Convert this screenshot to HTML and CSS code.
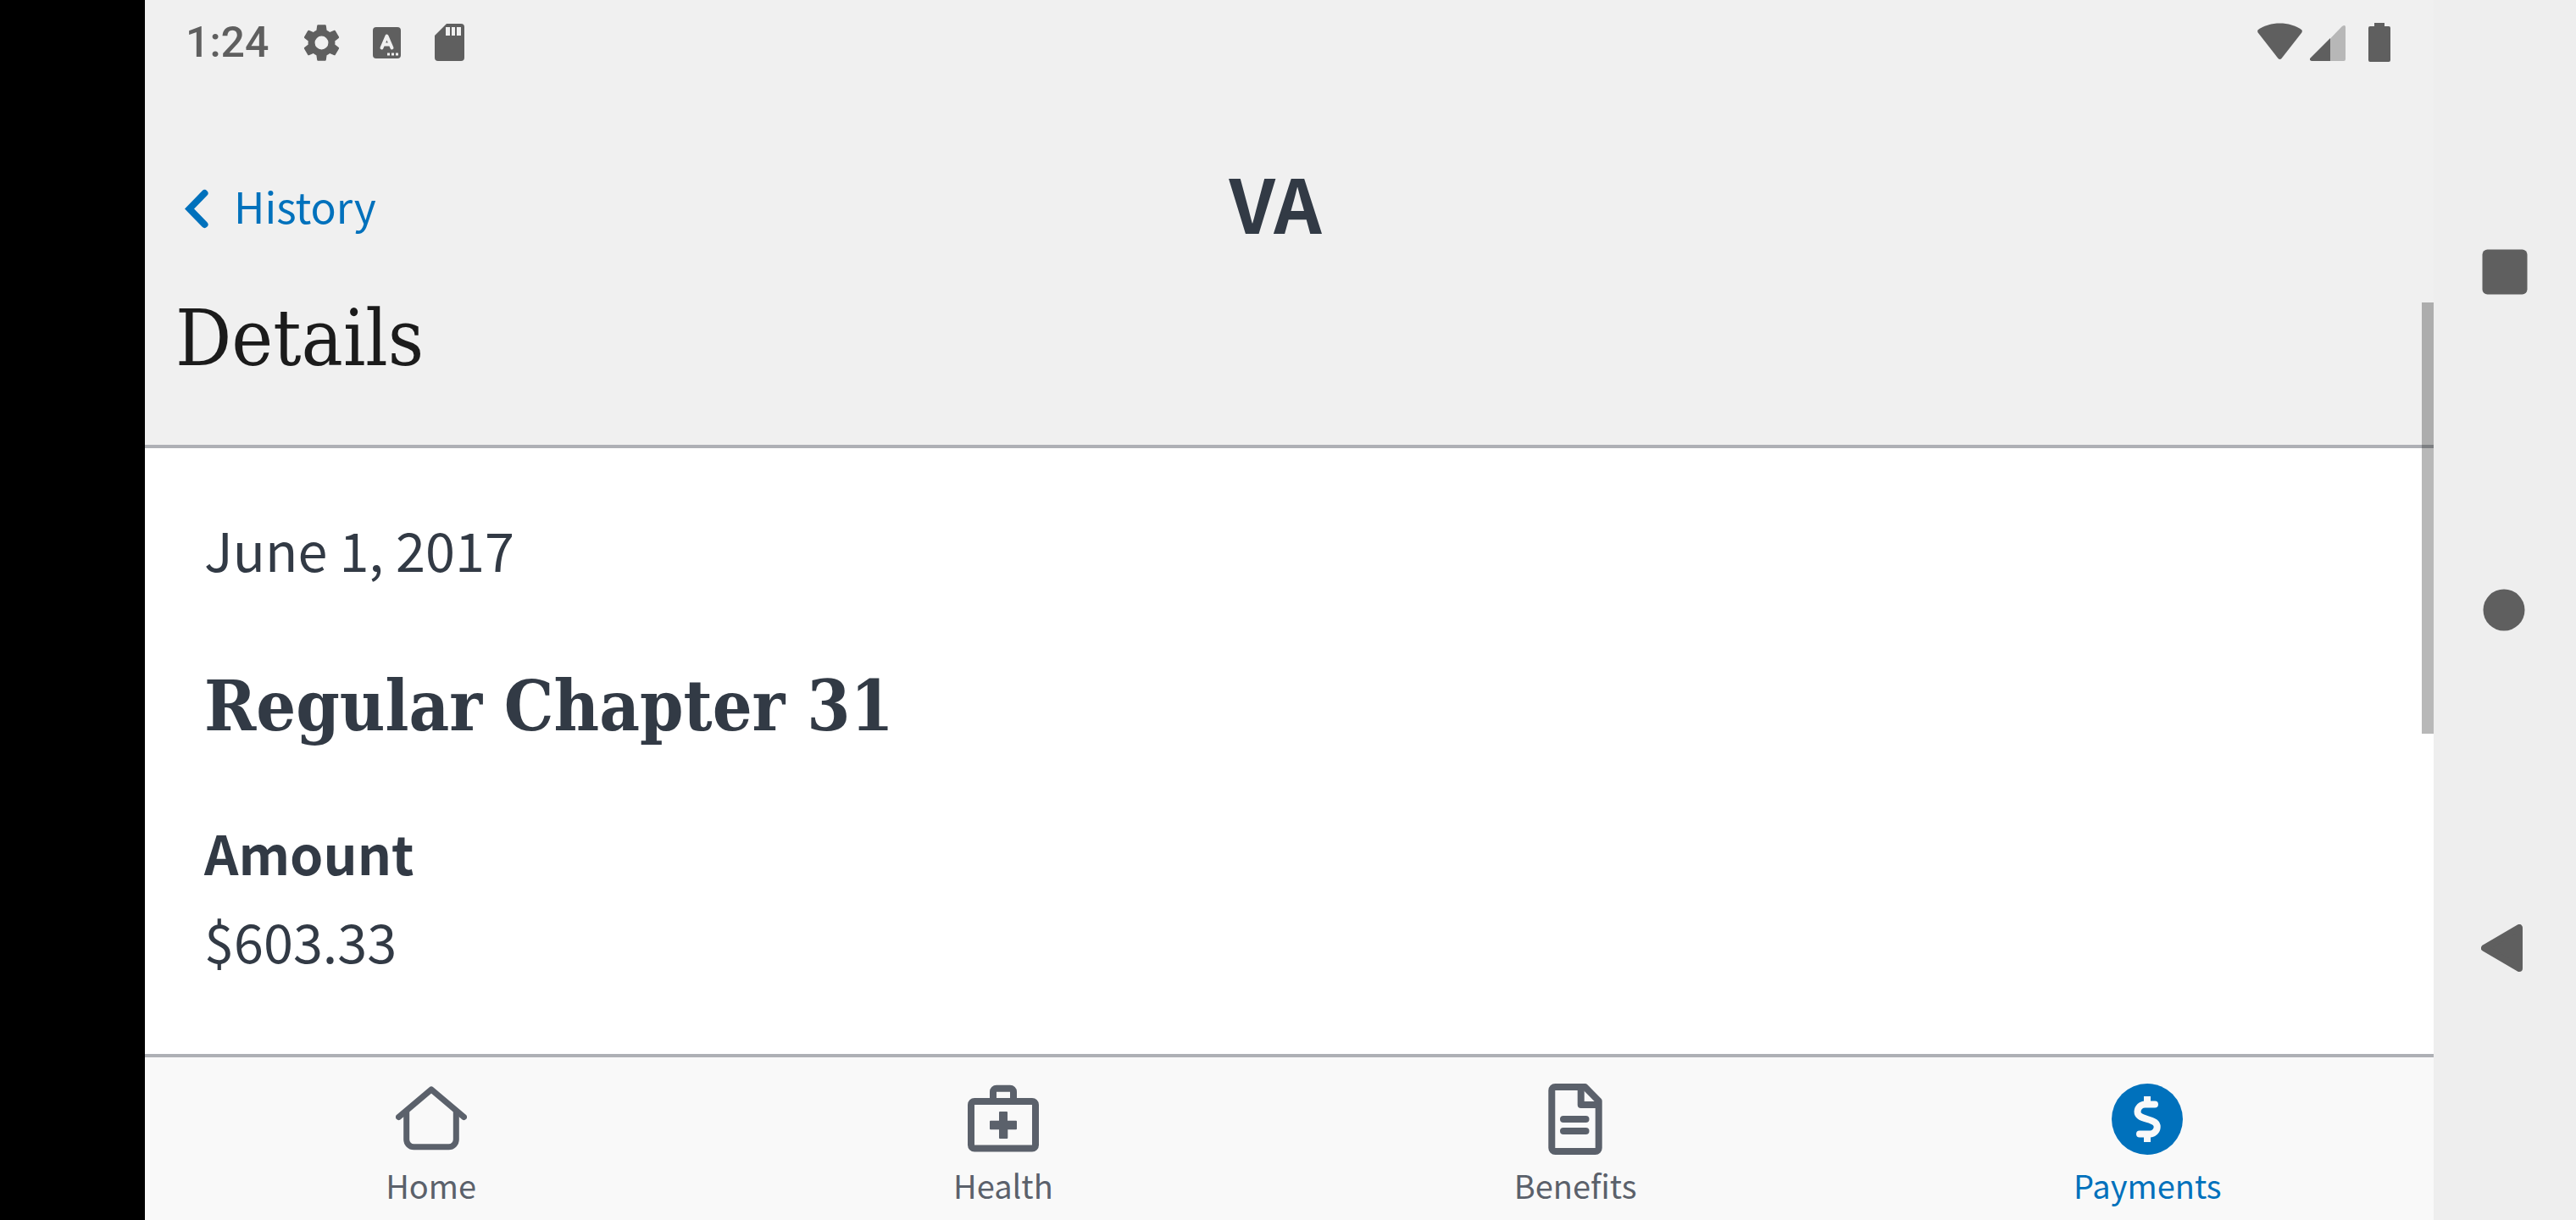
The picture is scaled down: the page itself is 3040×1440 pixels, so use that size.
FILE: index.html
```html
<!DOCTYPE html>
<html lang="en">
<head>
<meta charset="utf-8">
<meta name="viewport" content="width=device-width, initial-scale=1">
<title>Payment details</title>
<link rel="stylesheet" href="styles.css">
</head>
<body>
<div class="device">
  <div class="app">
    <div class="status-bar">
      <time class="clock">1:24</time>
      <div class="notifications">
        <svg width="53" height="53" viewBox="0 0 24 24" aria-hidden="true"><path fill="currentColor" d="M19.14 12.94c.04-.3.06-.61.06-.94 0-.32-.02-.64-.07-.94l2.03-1.58a.49.49 0 0 0 .12-.61l-1.92-3.32a.49.49 0 0 0-.59-.22l-2.39.96c-.5-.38-1.03-.7-1.62-.94l-.36-2.54a.48.48 0 0 0-.48-.41h-3.84c-.24 0-.43.17-.47.41l-.36 2.54c-.59.24-1.13.57-1.62.94l-2.39-.96a.48.48 0 0 0-.59.22L2.74 8.87c-.12.21-.08.47.12.61l2.03 1.58c-.05.3-.09.63-.09.94s.02.64.07.94l-2.03 1.58a.49.49 0 0 0-.12.61l1.92 3.32c.12.22.37.29.59.22l2.39-.96c.5.38 1.03.7 1.62.94l.36 2.54c.05.24.24.41.48.41h3.84c.24 0 .44-.17.47-.41l.36-2.54c.59-.24 1.13-.56 1.62-.94l2.39.96c.22.08.47 0 .59-.22l1.92-3.32a.48.48 0 0 0-.12-.61zM12 15.6A3.6 3.6 0 1 1 12 8.4a3.6 3.6 0 0 1 0 7.2z"/></svg>
        <svg width="33" height="37" viewBox="0 0 33 37" aria-hidden="true"><rect width="33" height="37" rx="4" fill="currentColor"/><path d="M10.500 24.500L16.500 10.500L22.500 24.500M13 20.500H20" fill="none" stroke="#f0f0f0" stroke-width="4" stroke-linecap="round" stroke-linejoin="round"/><path d="M17 30.500h3v3h-3zM22 30.500h3v3h-3zM27 30.500h3v3h-3z" fill="#f0f0f0"/></svg>
        <svg width="35" height="44" viewBox="0 0 35 44" aria-hidden="true"><path d="M14 0H31a4 4 0 0 1 4 4V40a4 4 0 0 1-4 4H4a4 4 0 0 1-4-4V14z" fill="currentColor"/><path d="M13 4h5v10h-5zM20 4h4v10h-4zM26 4h5v10h-5z" fill="#f0f0f0"/></svg>
      </div>
      <div class="signals">
        <svg width="53" height="46" viewBox="0 0 53 46" aria-hidden="true"><path d="M1 8C8 3 17 .5 26.500 .5S45 3 52 8Q53.500 9.500 52.300 11.500L28.500 42Q26.500 44 24.500 42L.7 11.500Q-.5 9.500 1 8z" fill="currentColor"/></svg>
        <svg width="42" height="46" viewBox="0 0 42 46" aria-hidden="true"><path d="M24 18.500L38 4Q42 1.500 42 5V43a2 2 0 0 1-2 2H24z" fill="#b7b7b7"/><path d="M24 18V45H2Q-1.500 44 .5 41.500z" fill="currentColor"/></svg>
        <svg class="battery" width="26" height="46" viewBox="0 0 26 46" aria-hidden="true"><path d="M7 0H19V4H24a2 2 0 0 1 2 2V44a2 2 0 0 1-2 2H2a2 2 0 0 1-2-2V6a2 2 0 0 1 2-2H7z" fill="currentColor"/></svg>
      </div>
    </div>

    <header class="header">
      <div class="toolbar">
        <a class="back" href="#history">
          <svg width="28" height="56" viewBox="0 0 28 56" aria-hidden="true"><path d="M23.500 14L5.500 32.500L23.500 51" fill="none" stroke="currentColor" stroke-width="8" stroke-linecap="round"/></svg>
          <span>History</span>
        </a>
        <span class="logo">VA</span>
      </div>
      <h1 class="title">Details</h1>
    </header>

    <main class="content">
      <p class="text">June 1, 2017</p>
      <h2 class="payment-name">Regular Chapter 31</h2>
      <h3 class="text label">Amount</h3>
      <p class="text">$603.33</p>
    </main>

    <nav class="tabs" aria-label="Main">
      <a class="tab" href="#home">
        <svg width="84" height="84" viewBox="0 0 84 84" fill="none" stroke="currentColor" stroke-width="7" stroke-linecap="round" stroke-linejoin="round" aria-hidden="true"><path d="M3.500 39.500L42 7L80.500 39.500"/><path stroke-linecap="butt" d="M12.700 31V66a8.700 8.700 0 0 0 8.700 8.700H62.600a8.700 8.700 0 0 0 8.700-8.700V31"/></svg>
        <span>Home</span>
      </a>
      <a class="tab" href="#health">
        <svg width="84" height="84" viewBox="0 0 84 84" fill="none" stroke="currentColor" stroke-width="8" aria-hidden="true"><rect x="4" y="21" width="76" height="55.500" rx="4"/><path d="M30 20V9.700a4 4 0 0 1 4-4H50a4 4 0 0 1 4 4V20"/><path fill="currentColor" stroke="none" d="M38 33h8a1 1 0 0 1 1 1v9.700H57a1 1 0 0 1 1 1v8.600a1 1 0 0 1-1 1H47.300V64a1 1 0 0 1-1 1H38a1 1 0 0 1-1-1V54.300H27a1 1 0 0 1-1-1V44.700a1 1 0 0 1 1-1H37V34a1 1 0 0 1 1-1z"/></svg>
        <span>Health</span>
      </a>
      <a class="tab" href="#benefits">
        <svg width="84" height="84" viewBox="0 0 84 84" fill="none" stroke="currentColor" stroke-width="8" stroke-linejoin="round" aria-hidden="true"><path d="M53.500 4H18.300a4 4 0 0 0-4 4V76a4 4 0 0 0 4 4H65.700a4 4 0 0 0 4-4V20.500z"/><path d="M48.700 4V25H69.700"/><path stroke-linecap="round" d="M28 42H54.500M28 56H54.500"/></svg>
        <span>Benefits</span>
      </a>
      <a class="tab tab-active" href="#payments" aria-current="page">
        <svg width="84" height="84" viewBox="0 0 84 84" fill="none" aria-hidden="true"><circle cx="42" cy="42" r="42" fill="currentColor"/><g stroke="#f9f9f9" stroke-width="8"><path stroke-linecap="round" d="M51 24.500H39.500a9 9 0 0 0-9 8.500c0 4.500 3 6.500 11.500 9s11.700 4.500 11.700 9.200a8.500 8.500 0 0 1-8.700 8.300H33"/><path d="M42 15V25M42 59V69"/></g></svg>
        <span>Payments</span>
      </a>
    </nav>
    <div class="scrollbar"></div>
  </div>

  <div class="system-nav">
    <button class="system-button" type="button" aria-label="Recent apps"><svg width="56" height="56" viewBox="0 0 56 56"><rect x="1.500" y="1.500" width="53" height="53" rx="6" fill="currentColor"/></svg></button>
    <button class="system-button" type="button" aria-label="Home"><svg width="56" height="56" viewBox="0 0 56 56"><circle cx="27" cy="28" r="24.500" fill="currentColor"/></svg></button>
    <button class="system-button" type="button" aria-label="Back"><svg width="56" height="56" viewBox="0 0 56 56"><path d="M4 28L45 4V52z" fill="currentColor" stroke="currentColor" stroke-width="8" stroke-linejoin="round"/></svg></button>
  </div>
</div>
</body>
</html>
```
FILE: styles.css
```css
* {
  box-sizing: border-box;
}

body,
h1,
h2,
h3,
p {
  margin: 0;
}

body {
  background: #000;
  color: #323a45;
  font-family: "Noto Sans CJK JP", "Open Sans", sans-serif;
}

svg {
  display: block;
  flex: none;
}

a {
  color: inherit;
  text-decoration: none;
}

.device {
  display: flex;
  min-height: 100vh;
  padding-left: 171px;
}

.app {
  position: relative;
  display: flex;
  flex: 1;
  flex-direction: column;
  background: #fff;
}

.status-bar {
  display: flex;
  align-items: center;
  height: 100px;
  padding: 0 51px 0 48px;
  background: #f0f0f0;
  color: #5f5f5f;
}

.clock {
  font: 500 50px/100px Roboto, sans-serif;
}

.notifications {
  display: flex;
  align-items: center;
  gap: 40px;
  margin-left: 36px;
}

.notifications svg:first-child {
  margin-right: -6px;
}

.signals {
  display: flex;
  align-items: center;
  gap: 9px;
  margin-left: auto;
}

.battery {
  margin-left: 18px;
}

.header {
  padding: 100px 36px 69px;
  border-bottom: 4px solid #aeb0b5;
  background: #f0f0f0;
}

.toolbar {
  display: grid;
  grid-template-columns: 1fr auto 1fr;
  align-items: center;
  height: 84px;
  margin-bottom: 60px;
  padding: 0 44px 0 11px;
}

.back {
  display: flex;
  align-items: center;
  gap: 30px;
  justify-self: start;
  color: #0071bc;
  font-size: 50px;
  line-height: 74px;
}

.logo {
  padding-bottom: 8px;
  font-size: 88px;
  font-weight: 700;
  line-height: 76px;
}

.title,
.payment-name {
  font-family: "DejaVu Serif Condensed", "DejaVu Serif", serif;
  line-height: 112px;
}

.title {
  color: #1b1b1b;
  font-size: 92px;
  font-weight: 400;
}

.content {
  flex: 1;
  padding: 67px 70px;
}

.text {
  font-size: 63px;
  font-weight: 400;
  line-height: 104px;
}

.label {
  font-weight: 700;
}

.payment-name {
  margin: 77px 0 65px;
  font-size: 82px;
  font-weight: 700;
}

.tabs {
  display: flex;
  height: 196px;
  padding-top: 31px;
  border-top: 4px solid #aeb0b5;
  background: #f9f9f9;
}

.tab {
  display: flex;
  flex: 1;
  flex-direction: column;
  align-items: center;
  gap: 8px;
  color: #5b616b;
  font-size: 38px;
  line-height: 56px;
}

.tab-active {
  color: #0071bc;
}

.scrollbar {
  position: absolute;
  top: 357px;
  right: 0;
  width: 14px;
  height: 509px;
  background: rgba(0, 0, 0, 0.28);
}

.system-nav {
  display: flex;
  flex-direction: column;
  width: 168px;
  padding: 121px 0;
  background: #eee;
}

.system-button {
  display: flex;
  flex: 1;
  align-items: center;
  justify-content: center;
  padding: 0;
  border: 0;
  background: none;
  color: #5f5f5f;
}
```
